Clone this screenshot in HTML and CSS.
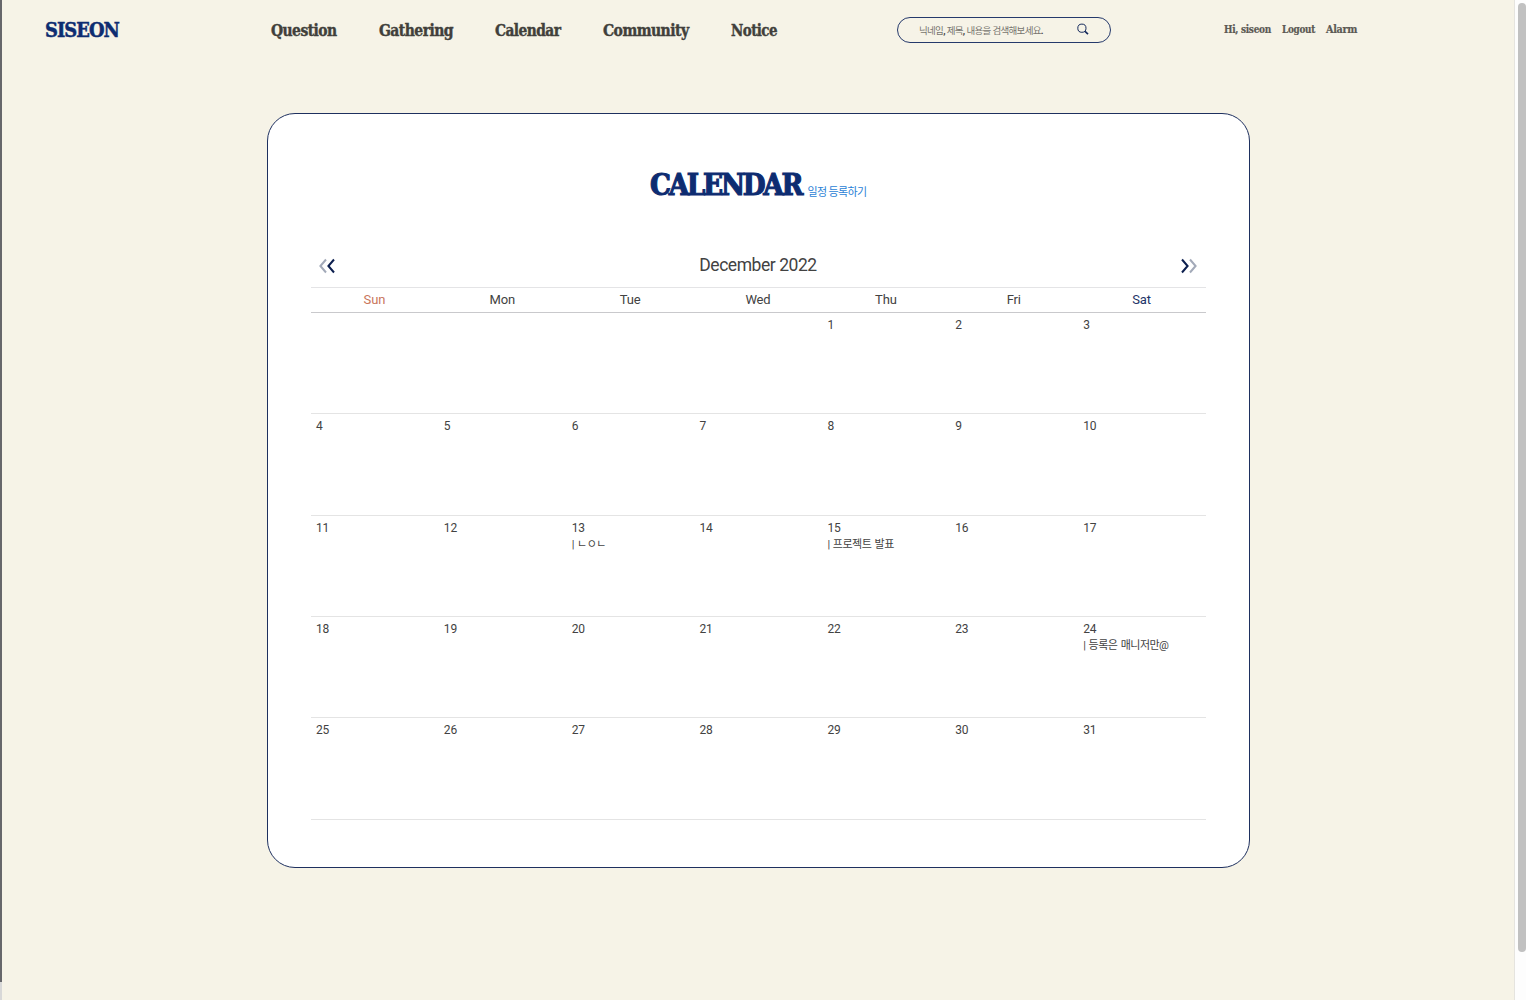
FILE: index.html
```html
<!DOCTYPE html>
<html lang="ko">
<head>
<meta charset="utf-8">
<title>SISEON</title>
<link rel="stylesheet" href="styles.css">
</head>
<body>
<div class="window-edge"></div>
<div class="page">
  <header class="header">
    <a class="logo"><svg width="76" height="30"><text x="0" y="22.3" textLength="74" lengthAdjust="spacingAndGlyphs">SISEON</text></svg></a>
    <nav class="nav">
      <a><svg width="66" height="26"><text x="0" y="18.5" textLength="65.5" lengthAdjust="spacingAndGlyphs">Question</text></svg></a>
      <a><svg width="74" height="26"><text x="0" y="18.5" textLength="74" lengthAdjust="spacingAndGlyphs">Gathering</text></svg></a>
      <a><svg width="66" height="26"><text x="0" y="18.5" textLength="65.5" lengthAdjust="spacingAndGlyphs">Calendar</text></svg></a>
      <a><svg width="86" height="26"><text x="0" y="18.5" textLength="85.5" lengthAdjust="spacingAndGlyphs">Community</text></svg></a>
      <a><svg width="47" height="26"><text x="0" y="18.5" textLength="46" lengthAdjust="spacingAndGlyphs">Notice</text></svg></a>
    </nav>
    <div class="search">
      <span class="placeholder">닉네임<b>,</b> 제목<b>,</b> 내용을 검색해보세요<b>.</b></span>
      <svg class="lens" width="12" height="12" viewBox="0 0 12 12"><circle cx="4.9" cy="4.2" r="4.1"/><path d="M8 7.3 11 10.1"/></svg>
    </div>
    <div class="user">
      <a><svg width="48" height="18"><text x="0" y="12.3" textLength="47" lengthAdjust="spacingAndGlyphs">Hi, siseon</text></svg></a>
      <a><svg width="34" height="18"><text x="0" y="12.3" textLength="33" lengthAdjust="spacingAndGlyphs">Logout</text></svg></a>
      <a><svg width="32" height="18"><text x="0" y="12.3" textLength="31" lengthAdjust="spacingAndGlyphs">Alarm</text></svg></a>
    </div>
  </header>

  <main class="card">
    <div class="title">
      <svg width="153" height="36"><text x="0" y="27.3" textLength="151" lengthAdjust="spacingAndGlyphs">CALENDAR</text></svg>
      <a class="add">일정 등록하기</a>
    </div>
    <div class="month">
      <svg class="arrows" width="18" height="16" viewBox="0 0 18 16"><path class="faint" d="M8 1.5 2.4 8 8 14.5"/><path d="M16 1.5 10.4 8 16 14.5"/></svg>
      <span>December 2022</span>
      <svg class="arrows" width="18" height="16" viewBox="0 0 18 16"><path d="M2 1.5 7.6 8 2 14.5"/><path class="faint" d="M10 1.5 15.6 8 10 14.5"/></svg>
    </div>
    <div class="weekdays">
      <span class="sun">Sun</span><span>Mon</span><span>Tue</span><span>Wed</span><span>Thu</span><span>Fri</span><span class="sat">Sat</span>
    </div>
    <div class="week"><div></div><div></div><div></div><div></div><div>1</div><div>2</div><div>3</div></div>
    <div class="week"><div>4</div><div>5</div><div>6</div><div>7</div><div>8</div><div>9</div><div>10</div></div>
    <div class="week"><div>11</div><div>12</div><div>13<p>| ㄴㅇㄴ</p></div><div>14</div><div>15<p>| 프로젝트 발표</p></div><div>16</div><div>17</div></div>
    <div class="week"><div>18</div><div>19</div><div>20</div><div>21</div><div>22</div><div>23</div><div>24<p>| 등록은 매니저만@</p></div></div>
    <div class="week"><div>25</div><div>26</div><div>27</div><div>28</div><div>29</div><div>30</div><div>31</div></div>
  </main>
</div>
<div class="scrollbar"><div class="thumb"></div></div>
</body>
</html>
```
FILE: styles.css
```css
* { box-sizing: border-box; }
body {
  margin: 0;
  height: 1000px;
  display: flex;
  overflow: hidden;
  background: #f6f3e7;
  color: #424242;
  font-family: Roboto, "Noto Sans CJK KR", sans-serif;
}
svg { display: block; overflow: visible; }
.window-edge {
  width: 2px;
  background: linear-gradient(#66676b 982px, #d8d8d8 982px);
}
.page { width: 1512px; }
.header {
  height: 60px;
  display: grid;
  grid-template-columns: 226px 626px 327px auto;
  align-items: center;
  padding-left: 43px;
}
.header text, .title text {
  font-family: "DejaVu Serif Condensed", "DejaVu Serif", serif;
  font-stretch: condensed;
  font-weight: bold;
}
.logo text { font-size: 21px; letter-spacing: -1px; fill: #0d2c71; stroke: #0d2c71; stroke-width: 0.5; }
.nav { display: flex; gap: 42px; }
.nav text { font-size: 16.5px; letter-spacing: -0.6px; fill: #413f3b; stroke: #413f3b; stroke-width: 0.4; }
.search {
  width: 214px;
  height: 26px;
  margin-bottom: 1px;
  border: 1px solid #25396b;
  border-radius: 13px;
  display: flex;
  align-items: center;
  justify-content: space-between;
  padding: 0 21px;
}
.placeholder {
  font-size: 9.5px;
  letter-spacing: -0.7px;
  word-spacing: 0.3px;
  color: #77756f;
  white-space: nowrap;
}
.placeholder b { color: #44423e; }
.lens { fill: none; stroke: #14295c; stroke-width: 1; }
.lens path { stroke-width: 1.6; }
.user { display: flex; gap: 10px; }
.user text { font-size: 10.5px; letter-spacing: -0.3px; fill: #5b5954; stroke: #5b5954; stroke-width: 0.2; }

.card {
  width: 983px;
  height: 755px;
  margin: 53px 0 0 264.5px;
  padding: 54px 43px 0;
  border: 1px solid #1e305f;
  border-radius: 28px;
  background: #fff;
}
.title {
  height: 76px;
  display: flex;
  justify-content: center;
  gap: 5px;
}
.title text { font-size: 29.5px; letter-spacing: -2.3px; fill: #0d2c71; stroke: #0d2c71; stroke-width: 1.1; }
.add {
  padding-top: 16px;
  font-size: 11px;
  line-height: 18px;
  letter-spacing: -0.65px;
  color: #2b7fd6;
}
.month {
  height: 43px;
  display: flex;
  justify-content: space-between;
  align-items: center;
  padding: 0 7px;
  font-size: 17.5px;
  letter-spacing: -0.45px;
}
.month span { padding-bottom: 1px; }
.arrows { fill: none; stroke: #0c1f4f; stroke-width: 2; }
.arrows .faint { stroke: #a3aab9; }
.weekdays, .week {
  display: grid;
  grid-template-columns: repeat(7, 1fr);
}
.weekdays {
  height: 26px;
  border-top: 1px solid #e4e4e6;
  border-bottom: 1px solid #c9c9cc;
  text-align: center;
  font-size: 13px;
  line-height: 24px;
  letter-spacing: -0.15px;
}
.sun { color: #c9755c; }
.sat { color: #223468; }
.week {
  height: 101.35px;
  border-bottom: 1px solid #e4e4e4;
  padding-top: 4px;
  font-size: 12px;
  line-height: 17px;
  letter-spacing: -0.2px;
}
.week div { padding-left: 5.5px; }
.week p {
  margin: 0;
  font-size: 11px;
  line-height: 16px;
  letter-spacing: -0.5px;
  word-spacing: 1px;
}
.scrollbar {
  width: 12px;
  border-left: 1px solid #e5e4df;
  background: #fdfdfd;
  padding: 3px 0 0 3px;
}
.thumb {
  height: 949px;
  border-radius: 4px;
  background: #c1c1c1;
}
```
